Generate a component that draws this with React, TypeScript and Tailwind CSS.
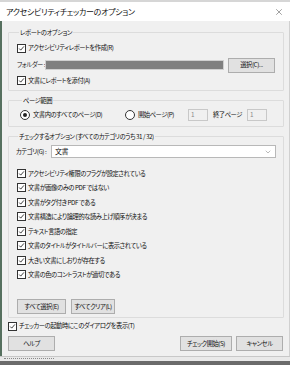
import { ChevronDown, X } from 'lucide-react'

const font = "font-['Meiryo_UI','Noto_Sans_CJK_JP',sans-serif] [font-feature-settings:'palt']"

function Check({ checked = true }: { checked?: boolean }) {
  return (
    <span className="flex h-[9px] w-[9px] shrink-0 items-center justify-center border border-[#333] bg-white">
      {checked && (
        <svg viewBox="0 0 9 9" className="h-[9px] w-[9px]">
          <polyline points="1.6,4.6 3.5,6.6 7.6,1.8" fill="none" stroke="#222" strokeWidth="1.1" />
        </svg>
      )}
    </span>
  )
}

function Radio({ on }: { on?: boolean }) {
  return (
    <span className="flex h-[10px] w-[10px] shrink-0 items-center justify-center rounded-full border border-[#333] bg-white">
      {on && <span className="h-[4px] w-[4px] rounded-full bg-[#222]" />}
    </span>
  )
}

function Row({ label, checked = true, className = '' }: { label: string; checked?: boolean; className?: string }) {
  return (
    <div className={`flex items-center gap-[2px] ${className}`}>
      <Check checked={checked} />
      <span className="whitespace-nowrap">{label}</span>
    </div>
  )
}

function Btn({ children, className = '' }: { children: React.ReactNode; className?: string }) {
  return (
    <div className={`flex h-[15px] items-center justify-center whitespace-nowrap border border-[#adadad] bg-[#e1e1e1] ${className}`}>
      {children}
    </div>
  )
}

function Group({ title, className = '', children }: { title: string; className?: string; children: React.ReactNode }) {
  return (
    <fieldset className={`rounded-[1px] border border-[#dcdcdc] ${className}`}>
      <legend className="ml-[2px] px-px leading-[9px] whitespace-nowrap">{title}</legend>
      {children}
    </fieldset>
  )
}

const items = [
  'アクセシビリティ権限のフラグが設定されている',
  '文書が画像のみの PDF ではない',
  '文書がタグ付き PDF である',
  '文書構造により論理的な読み上げ順序が決まる',
  'テキスト言語の指定',
  '文書のタイトルがタイトルバーに表示されている',
  '大きい文書にしおりが存在する',
  '文書の色のコントラストが適切である',
]

export default function App() {
  return (
    <div className={`relative flex h-[365px] w-[290px] flex-col overflow-hidden bg-[#f0f0f0] text-[6.3px] tracking-[-0.45px] text-[#111] ${font}`}>
      <div className="h-[2px] bg-[#d6d6d6]" />
      <div className="flex h-[19px] items-center justify-between bg-white pl-[6px] pr-[6px]">
        <span className="text-[8px] tracking-[-0.3px]">アクセシビリティチェッカーのオプション</span>
        <X className="h-[10px] w-[10px] text-[#444]" strokeWidth={1.2} />
      </div>

      <div className="flex flex-1 flex-col border-l-2 border-r border-l-[#56705f] border-r-[#d0d0d0] pl-[6px] pr-[6px]">
        <Group title="レポートのオプション" className="mt-[7px] h-[63px] w-[276px] px-[8px]">
          <Row label="アクセシビリティレポートを作成(R)" className="mt-[5px] h-[12px]" />
          <div className="mt-[4px] flex h-[14px] items-center">
            <span className="w-[28px] whitespace-nowrap text-[#222]">フォルダー :</span>
            <div className="h-[10px] w-[179px] border border-[#cfcfcf] bg-[#7f7f7f]" />
            <Btn className="ml-[4px] w-[47px]">選択(C)...</Btn>
          </div>
          <Row label="文書にレポートを添付(A)" className="mt-[3px] h-[11px]" />
        </Group>

        <Group title="ページ範囲" className="mt-[5px] h-[31px] w-[276px] px-[11px]">
          <div className="mt-[4px] flex h-[12px] items-center">
            <Radio on />
            <span className="ml-[3px] w-[92px] whitespace-nowrap">文書内のすべてのページ(D)</span>
            <Radio />
            <span className="ml-[3px] w-[50px] whitespace-nowrap">開始ページ(P)</span>
            <div className="flex h-[12px] w-[20px] items-center border border-[#c8c8c8] pl-[2px] text-[#888]">1</div>
            <span className="ml-[5px] w-[34px] whitespace-nowrap">終了ページ</span>
            <div className="flex h-[12px] w-[20px] items-center border border-[#c8c8c8] pl-[2px] text-[#888]">1</div>
          </div>
        </Group>

        <Group title="チェックするオプション (すべてのカテゴリのうち 31 / 32)" className="mt-[5px] h-[186px] w-[276px] px-[7px]">
          <div className="mt-[4px] flex h-[13px] items-center">
            <span className="w-[35px] whitespace-nowrap">カテゴリ(G) :</span>
            <div className="flex h-[13px] flex-1 items-center justify-between border border-[#b8b8b8] bg-white pl-[3px] pr-[3px] text-[7px]">
              <span>文書</span>
              <ChevronDown className="h-[8px] w-[8px] text-[#777]" strokeWidth={1.5} />
            </div>
          </div>
          <div className="mt-[8px] flex flex-col pl-[1px]">
            {items.map((t) => (
              <Row key={t} label={t} className="h-[14.5px]" />
            ))}
          </div>
          <div className="mt-[17px] flex gap-[5px] pl-[1px]">
            <Btn className="w-[49px]">すべて選択(E)</Btn>
            <Btn className="w-[44px]">すべてクリア(L)</Btn>
          </div>
        </Group>

        <Row label="チェッカーの起動時にこのダイアログを表示(T)" className="mt-[1px] h-[14px]" />
        <div className="mt-[3px] flex items-center">
          <Btn className="w-[47px]">ヘルプ</Btn>
          <div className="flex-1" />
          <Btn className="w-[52px] border-[#0078d7]">チェック開始(S)</Btn>
          <Btn className="ml-[4px] w-[47px]">キャンセル</Btn>
        </div>
      </div>

      <div className="h-[5px] border-t border-[#c8c8c8] bg-[#e9e9e9] px-[4px] pt-[1px]">
        <div className="h-[2px] w-[50px] border-t border-dotted border-[#8a8a8a]" />
      </div>
      <div className="h-[4px] bg-[#6b6b6b]" />
    </div>
  )
}
